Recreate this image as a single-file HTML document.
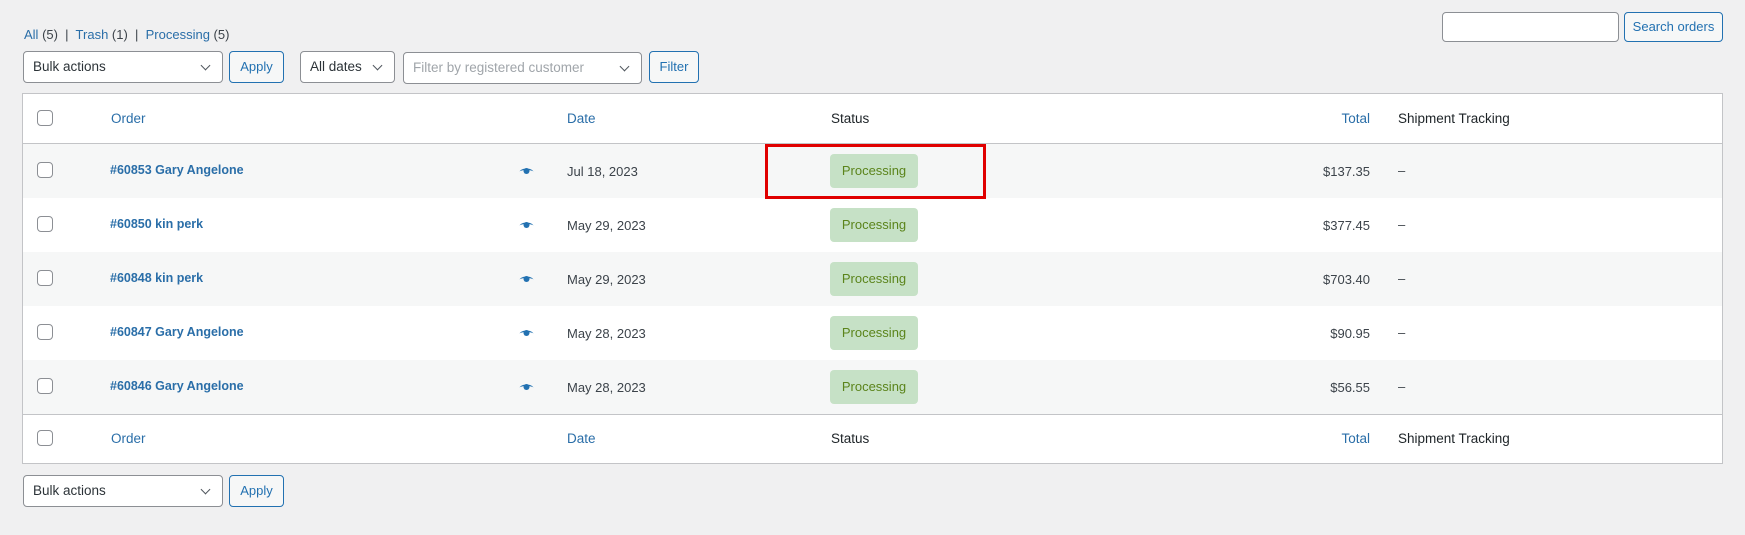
<!DOCTYPE html>
<html><head><style>
body{margin:0;width:1745px;height:535px;background:#f0f0f1;font-family:"Liberation Sans",sans-serif;font-size:13px;color:#3c434a;position:relative;overflow:hidden}
.a{position:absolute}
.lnk{color:#2a6ea8}
.sel{position:absolute;background:#fff;border:1px solid #8c8f94;border-radius:4px;box-sizing:border-box;height:32px;line-height:30px;padding-left:9px;color:#2c3338;font-size:13.5px}
.sel:after{content:"";position:absolute;right:13px;top:10px;width:6px;height:6px;border-right:1.6px solid #50575e;border-bottom:1.6px solid #50575e;transform:rotate(45deg)}
.btn{position:absolute;background:#f6f7f7;border:1px solid #2271b1;border-radius:4px;box-sizing:border-box;height:32px;line-height:30px;color:#2271b1;text-align:center;font-size:13px}
.cb{position:absolute;left:37px;width:16px;height:16px;border:1px solid #8c8f94;border-radius:4px;box-sizing:border-box;background:#fff}
.row{position:absolute;left:23px;width:1699px;height:54px}
.badge{position:absolute;left:830px;width:88px;height:34px;background:#c6e1c6;color:#5b841b;border-radius:4px;text-align:center;line-height:34px;font-size:13px}
.eye{position:absolute;left:519px;width:15px;height:8px}
</style></head><body>
<div class="a" style="left:24px;top:27px"><span class="lnk">All</span> (5) &nbsp;|&nbsp; <span class="lnk">Trash</span> (1) &nbsp;|&nbsp; <span class="lnk">Processing</span> (5)</div>
<div class="sel" style="left:23px;top:51px;width:200px">Bulk actions</div>
<div class="btn" style="left:229px;top:51px;width:55px">Apply</div>
<div class="sel" style="left:300px;top:51px;width:95px">All dates</div>
<div class="sel" style="left:403px;top:52px;width:239px;color:#a0a5aa">Filter by registered customer</div>
<div class="btn" style="left:649px;top:51px;width:50px">Filter</div>
<div class="a" style="left:1442px;top:12px;width:177px;height:30px;background:#fff;border:1px solid #8c8f94;border-radius:4px;box-sizing:border-box"></div>
<div class="btn" style="left:1624px;top:12px;width:99px;height:30px;line-height:28px">Search orders</div>

<div class="a" style="left:22px;top:93px;width:1701px;height:371px;border:1px solid #c3c4c7;box-sizing:border-box;background:#fff"></div>
<div class="a" style="left:23px;top:143px;width:1699px;height:1px;background:#c3c4c7"></div>
<div class="a" style="left:23px;top:414px;width:1699px;height:1px;background:#c3c4c7"></div>

<div class="cb" style="top:110px"></div>
<div class="a lnk" style="left:111px;top:111px;font-size:13.5px">Order</div>
<div class="a lnk" style="left:567px;top:111px;font-size:13.5px">Date</div>
<div class="a" style="left:831px;top:111px;color:#1d2327;font-size:13.5px">Status</div>
<div class="a lnk" style="left:1270px;width:100px;text-align:right;top:111px;font-size:13.5px">Total</div>
<div class="a" style="left:1398px;top:111px;color:#1d2327;font-size:13.5px">Shipment Tracking</div>

<div class="row" style="top:144px;background:#f6f7f7"></div>
<div class="row" style="top:252px;background:#f6f7f7"></div>
<div class="row" style="top:360px;background:#f6f7f7"></div>

<div id="rows"></div>
<script>
var d=[["#60853 Gary Angelone","Jul 18, 2023","$137.35"],["#60850 kin perk","May 29, 2023","$377.45"],["#60848 kin perk","May 29, 2023","$703.40"],["#60847 Gary Angelone","May 28, 2023","$90.95"],["#60846 Gary Angelone","May 28, 2023","$56.55"]];
var h="";
d.forEach(function(r,i){var t=144+i*54;
h+='<div class="cb" style="top:'+(t+18)+'px"></div>';
h+='<div class="a lnk" style="left:110px;top:'+(t+19)+'px;font-weight:bold;font-size:12.5px">'+r[0]+'</div>';
h+='<svg class="eye" style="top:'+(t+23)+'px" viewBox="0 0 15 8"><path d="M0.5 4.5C3 0.5 12 0.5 14.5 4.5C12 2.5 3 2.5 0.5 4.5Z" fill="#2271b1"/><circle cx="7.5" cy="4" r="3" fill="#2271b1"/></svg>';
h+='<div class="a" style="left:567px;top:'+(t+20)+'px;font-size:13px">'+r[1]+'</div>';
h+='<div class="badge" style="top:'+(t+10)+'px">Processing</div>';
h+='<div class="a" style="left:1270px;width:100px;text-align:right;top:'+(t+20)+'px;font-size:13px">'+r[2]+'</div>';
h+='<div class="a" style="left:1398px;top:'+(t+19)+'px">–</div>';});
document.getElementById("rows").innerHTML=h;
</script>

<div class="cb" style="top:430px"></div>
<div class="a lnk" style="left:111px;top:431px;font-size:13.5px">Order</div>
<div class="a lnk" style="left:567px;top:431px;font-size:13.5px">Date</div>
<div class="a" style="left:831px;top:431px;color:#1d2327;font-size:13.5px">Status</div>
<div class="a lnk" style="left:1270px;width:100px;text-align:right;top:431px;font-size:13.5px">Total</div>
<div class="a" style="left:1398px;top:431px;color:#1d2327;font-size:13.5px">Shipment Tracking</div>

<div class="a" style="left:765px;top:144px;width:221px;height:55px;border:3px solid #e00000;box-sizing:border-box"></div>

<div class="sel" style="left:23px;top:475px;width:200px">Bulk actions</div>
<div class="btn" style="left:229px;top:475px;width:55px">Apply</div>
</body></html>
